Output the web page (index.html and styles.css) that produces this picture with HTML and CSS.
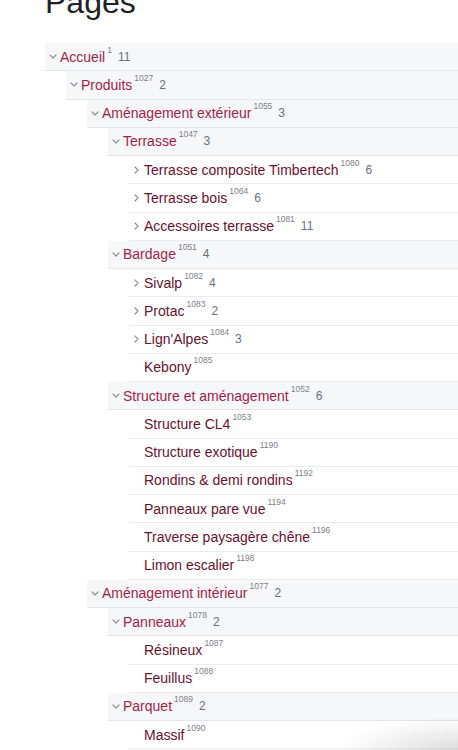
FILE: index.html
```html
<!DOCTYPE html>
<html lang="fr">
<head>
<meta charset="utf-8">
<title>Pages</title>
<link rel="stylesheet" href="styles.css">
</head>
<body>
<main class="page">
  <h1 class="title">Pages</h1>
  <ul class="tree">
    <li class="node open">
      <div class="row"><span class="chev"><svg width="8" height="5" viewBox="0 0 8 5"><path d="M1 1L4 4L7 1"/></svg></span><span class="label">Accueil<sup>1</sup></span><span class="count">11</span></div>
      <ul class="children">
        <li class="node open">
          <div class="row"><span class="chev"><svg width="8" height="5" viewBox="0 0 8 5"><path d="M1 1L4 4L7 1"/></svg></span><span class="label">Produits<sup>1027</sup></span><span class="count">2</span></div>
          <ul class="children">
            <li class="node open">
              <div class="row"><span class="chev"><svg width="8" height="5" viewBox="0 0 8 5"><path d="M1 1L4 4L7 1"/></svg></span><span class="label">Aménagement extérieur<sup>1055</sup></span><span class="count">3</span></div>
              <ul class="children">
                <li class="node open">
                  <div class="row"><span class="chev"><svg width="8" height="5" viewBox="0 0 8 5"><path d="M1 1L4 4L7 1"/></svg></span><span class="label">Terrasse<sup>1047</sup></span><span class="count">3</span></div>
                  <ul class="children">
                    <li class="node"><div class="row"><span class="chev"><svg width="5" height="8" viewBox="0 0 5 8"><path d="M1 1L4 4L1 7"/></svg></span><span class="label">Terrasse composite Timbertech<sup>1080</sup></span><span class="count">6</span></div></li>
                    <li class="node"><div class="row"><span class="chev"><svg width="5" height="8" viewBox="0 0 5 8"><path d="M1 1L4 4L1 7"/></svg></span><span class="label">Terrasse bois<sup>1064</sup></span><span class="count">6</span></div></li>
                    <li class="node"><div class="row"><span class="chev"><svg width="5" height="8" viewBox="0 0 5 8"><path d="M1 1L4 4L1 7"/></svg></span><span class="label">Accessoires terrasse<sup>1081</sup></span><span class="count">11</span></div></li>
                  </ul>
                </li>
                <li class="node open">
                  <div class="row"><span class="chev"><svg width="8" height="5" viewBox="0 0 8 5"><path d="M1 1L4 4L7 1"/></svg></span><span class="label">Bardage<sup>1051</sup></span><span class="count">4</span></div>
                  <ul class="children">
                    <li class="node"><div class="row"><span class="chev"><svg width="5" height="8" viewBox="0 0 5 8"><path d="M1 1L4 4L1 7"/></svg></span><span class="label">Sivalp<sup>1082</sup></span><span class="count">4</span></div></li>
                    <li class="node"><div class="row"><span class="chev"><svg width="5" height="8" viewBox="0 0 5 8"><path d="M1 1L4 4L1 7"/></svg></span><span class="label">Protac<sup>1083</sup></span><span class="count">2</span></div></li>
                    <li class="node"><div class="row"><span class="chev"><svg width="5" height="8" viewBox="0 0 5 8"><path d="M1 1L4 4L1 7"/></svg></span><span class="label">Lign'Alpes<sup>1084</sup></span><span class="count">3</span></div></li>
                    <li class="node"><div class="row"><span class="chev"></span><span class="label">Kebony<sup>1085</sup></span></div></li>
                  </ul>
                </li>
                <li class="node open">
                  <div class="row"><span class="chev"><svg width="8" height="5" viewBox="0 0 8 5"><path d="M1 1L4 4L7 1"/></svg></span><span class="label">Structure et aménagement<sup>1052</sup></span><span class="count">6</span></div>
                  <ul class="children">
                    <li class="node"><div class="row"><span class="chev"></span><span class="label">Structure CL4<sup>1053</sup></span></div></li>
                    <li class="node"><div class="row"><span class="chev"></span><span class="label">Structure exotique<sup>1190</sup></span></div></li>
                    <li class="node"><div class="row"><span class="chev"></span><span class="label">Rondins &amp; demi rondins<sup>1192</sup></span></div></li>
                    <li class="node"><div class="row"><span class="chev"></span><span class="label">Panneaux pare vue<sup>1194</sup></span></div></li>
                    <li class="node"><div class="row"><span class="chev"></span><span class="label">Traverse paysagère chêne<sup>1196</sup></span></div></li>
                    <li class="node"><div class="row"><span class="chev"></span><span class="label">Limon escalier<sup>1198</sup></span></div></li>
                  </ul>
                </li>
              </ul>
            </li>
            <li class="node open">
              <div class="row"><span class="chev"><svg width="8" height="5" viewBox="0 0 8 5"><path d="M1 1L4 4L7 1"/></svg></span><span class="label">Aménagement intérieur<sup>1077</sup></span><span class="count">2</span></div>
              <ul class="children">
                <li class="node open">
                  <div class="row"><span class="chev"><svg width="8" height="5" viewBox="0 0 8 5"><path d="M1 1L4 4L7 1"/></svg></span><span class="label">Panneaux<sup>1078</sup></span><span class="count">2</span></div>
                  <ul class="children">
                    <li class="node"><div class="row"><span class="chev"></span><span class="label">Résineux<sup>1087</sup></span></div></li>
                    <li class="node"><div class="row"><span class="chev"></span><span class="label">Feuillus<sup>1088</sup></span></div></li>
                  </ul>
                </li>
                <li class="node open">
                  <div class="row"><span class="chev"><svg width="8" height="5" viewBox="0 0 8 5"><path d="M1 1L4 4L7 1"/></svg></span><span class="label">Parquet<sup>1089</sup></span><span class="count">2</span></div>
                  <ul class="children">
                    <li class="node"><div class="row"><span class="chev"></span><span class="label">Massif<sup>1090</sup></span></div></li>
                  </ul>
                </li>
              </ul>
            </li>
          </ul>
        </li>
      </ul>
    </li>
  </ul>
</main>
<div class="shade"></div>
</body>
</html>
```

FILE: styles.css
```css
html, body {
  margin: 0;
  padding: 0;
  background: #ffffff;
  overflow: hidden;
}

body {
  font-family: "Liberation Sans", Arial, sans-serif;
  color: #1f2328;
}

.page {
  padding-left: 45px;
}

.title {
  margin: -17px 0 21.6px 0;
  font-size: 32px;
  line-height: 38.4px;
  font-weight: 400;
  color: #1d2228;
}

.tree,
.children {
  list-style: none;
  margin: 0;
  padding: 0;
}

.children {
  padding-left: 21px;
}

.row {
  box-sizing: border-box;
  height: 28.25px;
  display: flex;
  align-items: center;
  border-bottom: 1px solid #ebecef;
  background: #ffffff;
}

.open > .row {
  background: #f6f7f9;
  border-bottom: 1px solid #e3e5e8;
}

.chev {
  flex: 0 0 auto;
  width: 15px;
  height: 10px;
  display: flex;
  align-items: center;
  justify-content: center;
}

.chev svg path {
  fill: none;
  stroke: #8d9199;
  stroke-width: 1.2;
  stroke-linecap: round;
  stroke-linejoin: round;
}

.label {
  font-size: 14px;
  line-height: 28px;
  color: #6c1030;
  white-space: nowrap;
}

.open > .row > .label {
  color: #a51d4b;
}

.label sup {
  font-size: 8.5px;
  line-height: 0;
  vertical-align: 9px;
  margin-left: 2px;
  color: #7d8188;
}

.count {
  font-size: 12px;
  line-height: 28px;
  color: #6b7078;
  margin-left: 6px;
}

.shade {
  position: fixed;
  right: 0;
  bottom: 0;
  width: 150px;
  height: 36px;
  pointer-events: none;
  background: radial-gradient(ellipse 120px 34px at 100% 100%, rgba(0, 0, 0, 0.13), rgba(0, 0, 0, 0.05) 60%, rgba(0, 0, 0, 0) 100%);
}
```
